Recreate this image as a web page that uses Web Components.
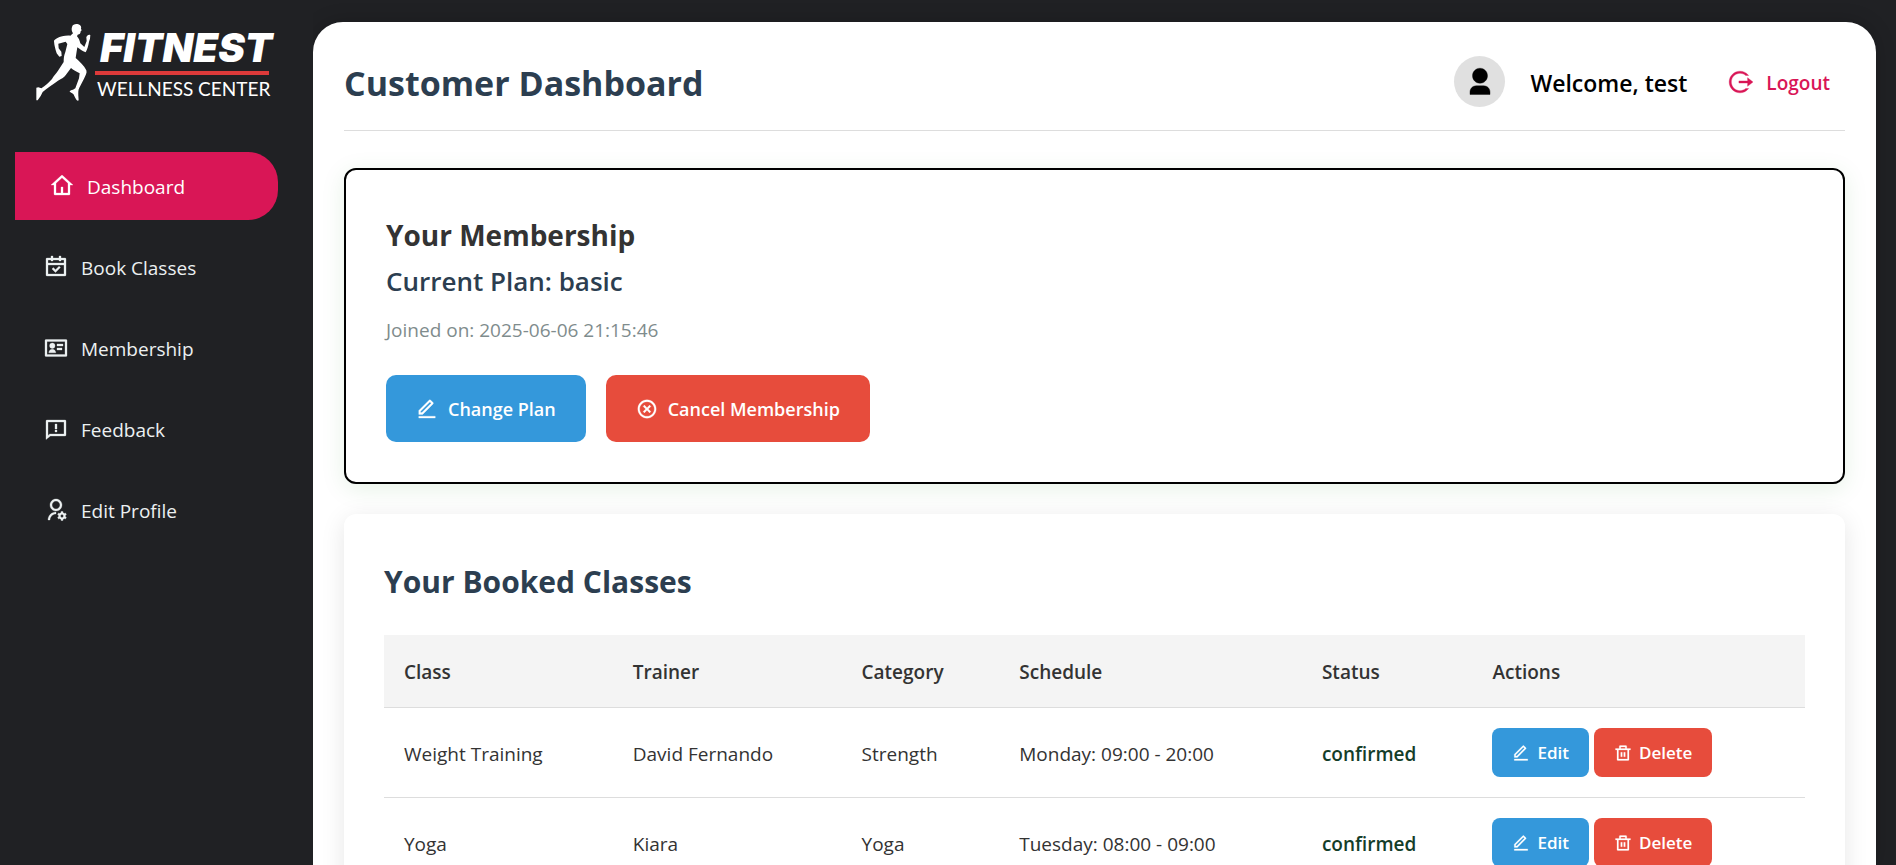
<!DOCTYPE html>
<html lang="en">
<head>
<meta charset="utf-8">
<meta name="viewport" content="width=device-width, initial-scale=1">
<title>Fitnest – Customer Dashboard</title>
<style>
  :root {
    --ink: #202124;
    --accent: #d91656;
    --navy: #2c3e50;
    --text: #333;
    --blue: #3498db;
    --red: #e74c3c;
    --line: #ddd;
  }
  body {
    margin: 0;
    background: var(--ink);
    color: var(--text);
    font: 19px/30px "Open Sans", "Noto Sans", sans-serif;
  }
</style>
</head>
<body>
<fit-layout>
  <fit-sidebar slot="sidebar">
    <fit-nav-item icon="home" active>Dashboard</fit-nav-item>
    <fit-nav-item icon="calendar">Book Classes</fit-nav-item>
    <fit-nav-item icon="card">Membership</fit-nav-item>
    <fit-nav-item icon="feedback">Feedback</fit-nav-item>
    <fit-nav-item icon="profile">Edit Profile</fit-nav-item>
  </fit-sidebar>
  <fit-header user="test">Customer Dashboard</fit-header>
  <fit-membership plan="basic" joined="2025-06-06 21:15:46"></fit-membership>
  <fit-bookings></fit-bookings>
</fit-layout>

<script>
const define = (name, html, setup) => {
  const template = document.createElement('template');
  template.innerHTML = html;
  customElements.define(name, class extends HTMLElement {
    constructor() {
      super();
      this.attachShadow({ mode: 'open' }).append(template.content.cloneNode(true));
    }
    connectedCallback() {
      if (setup) setup(this, this.shadowRoot);
    }
  });
};

const ICONS = {
  home: 'M19 21H5C4.448 21 4 20.552 4 20V11H1L11.327 1.612C11.709 1.265 12.291 1.265 12.673 1.612L23 11H20V20C20 20.552 19.552 21 19 21ZM13 19H18V9.157L12 3.703L6 9.157V19H11V13H13V19Z',
  calendar: 'M9 1V3H15V1H17V3H21C21.552 3 22 3.448 22 4V20C22 20.552 21.552 21 21 21H3C2.448 21 2 20.552 2 20V4C2 3.448 2.448 3 3 3H7V1H9ZM20 10H4V19H20V10ZM15.036 11.136L16.45 12.55L11.5 17.5L7.964 13.964L9.379 12.55L11.5 14.672L15.036 11.136ZM7 5H4V8H20V5H17V6H15V5H9V6H7V5Z',
  card: 'M2 3.5H22C22.552 3.5 23 3.948 23 4.5V19.5C23 20.052 22.552 20.5 22 20.5H2C1.448 20.5 1 20.052 1 19.5V4.5C1 3.948 1.448 3.5 2 3.5ZM3 5.5V18.5H21V5.5H3ZM8.3 7A2.7 2.7 0 1 1 8.3 12.4A2.7 2.7 0 1 1 8.3 7ZM4.8 16.8C4.8 14.7 6.3 13.2 8.3 13.2C10.3 13.2 11.8 14.7 11.8 16.8H4.8ZM13 8H19V10H13V8ZM13 12H18V14H13V12Z',
  feedback: 'M6.455 19L2 22.5V4C2 3.448 2.448 3 3 3H21C21.552 3 22 3.448 22 4V18C22 18.552 21.552 19 21 19H6.455ZM4 18.385L5.763 17H20V5H4V18.385ZM11 13H13V15H11V13ZM11 7H13V12H11V7Z',
  profile: 'M12 14V16C8.686 16 6 18.686 6 22H4C4 17.582 7.582 14 12 14ZM12 13C8.685 13 6 10.315 6 7C6 3.685 8.685 1 12 1C15.315 1 18 3.685 18 7C18 10.315 15.315 13 12 13ZM12 11C14.21 11 16 9.21 16 7C16 4.79 14.21 3 12 3C9.79 3 8 4.79 8 7C8 9.21 9.79 11 12 11ZM14.595 18.811C14.533 18.551 14.5 18.279 14.5 18C14.5 17.721 14.533 17.449 14.595 17.189L13.603 16.616L14.603 14.884L15.595 15.457C15.988 15.085 16.468 14.803 17 14.645V13.5H19V14.645C19.532 14.803 20.012 15.085 20.405 15.457L21.397 14.884L22.397 16.616L21.405 17.189C21.467 17.449 21.5 17.721 21.5 18C21.5 18.279 21.467 18.551 21.405 18.811L22.397 19.384L21.397 21.116L20.405 20.543C20.012 20.915 19.532 21.197 19 21.355V22.5H17V21.355C16.468 21.197 15.988 20.915 15.595 20.543L14.603 21.116L13.603 19.384L14.595 18.811ZM18 19.5C18.828 19.5 19.5 18.828 19.5 18C19.5 17.172 18.828 16.5 18 16.5C17.172 16.5 16.5 17.172 16.5 18C16.5 18.828 17.172 19.5 18 19.5Z',
  user: 'M20 22H4V20C4 17.239 6.239 15 9 15H15C17.761 15 20 17.239 20 20V22ZM12 13C8.686 13 6 10.314 6 7C6 3.686 8.686 1 12 1C15.314 1 18 3.686 18 7C18 10.314 15.314 13 12 13Z',
  logout: 'M2 12C2 6.477 6.477 2 12 2C15.271 2 18.176 3.571 20 6H17.291C15.881 4.755 14.029 4 12 4C7.582 4 4 7.582 4 12C4 16.418 7.582 20 12 20C14.029 20 15.882 19.245 17.292 18H20C18.176 20.429 15.272 22 12 22C6.477 22 2 17.523 2 12ZM19 16V13H11V11H19V8L24 12L19 16Z',
  edit: 'M6.414 15.89L16.556 5.748L15.142 4.334L5 14.476V15.89H6.414ZM7.243 17.89H3V13.647L14.435 2.212C14.826 1.822 15.459 1.822 15.849 2.212L18.678 5.041C19.068 5.431 19.068 6.064 18.678 6.455L7.243 17.89ZM3 19.89H21V21.89H3V19.89Z',
  cancel: 'M12 22C6.477 22 2 17.523 2 12C2 6.477 6.477 2 12 2C17.523 2 22 6.477 22 12C22 17.523 17.523 22 12 22ZM12 20C16.418 20 20 16.418 20 12C20 7.582 16.418 4 12 4C7.582 4 4 7.582 4 12C4 16.418 7.582 20 12 20ZM12 10.586L14.828 7.757L16.243 9.172L13.414 12L16.243 14.828L14.828 16.243L12 13.414L9.172 16.243L7.757 14.828L10.586 12L7.757 9.172L9.172 7.757L12 10.586Z',
  trash: 'M17 6H22V8H20V21C20 21.552 19.552 22 19 22H5C4.448 22 4 21.552 4 21V8H2V6H7V3C7 2.448 7.448 2 8 2H16C16.552 2 17 2.448 17 3V6ZM18 8H6V20H18V8ZM9 11H11V17H9V11ZM13 11H15V17H13V11ZM9 4V6H15V4H9Z'
};

define('fit-icon', `
  <style>
    :host { display: block; flex: none; width: 24px; height: 24px; }
    svg { display: block; width: 100%; height: 100%; }
  </style>
  <svg viewBox="0 0 24 24" fill="currentColor" stroke="currentColor" stroke-width=".3" fill-rule="evenodd" aria-hidden="true"><path/></svg>
`, (el, root) => root.querySelector('path').setAttribute('d', ICONS[el.getAttribute('name')]));

define('fit-logo', `
  <style>
    :host { display: flex; align-items: flex-start; color: #fff; white-space: nowrap; }
    svg { flex: none; width: 65px; height: 90px; }
    .name { margin-top: 10px; padding-left: 5px; font: italic 900 40px/40px Inter, sans-serif; }
    .rule { height: 4px; margin: 3px 3px 0 0; background: #dc3a3a; }
    .tag { margin-top: 2px; padding-left: 2px; font: 19px/24px Lato, sans-serif; }
  </style>
  <svg viewBox="0 0 195 270" fill="#fff" aria-hidden="true">
    <path d="M126 27C128 19 137 17 145 19C152 21 155 26 153 32L155 37L152 40C152 46 149 50 143 50L141 55C146 60 149 67 151 76L163 87L170 69L169 58C171 52 176 48 181 51L180 62L177 71C175 83 172 94 167 103C157 99 149 93 142 88C140 98 139 109 137 120C149 131 162 142 169 157C172 165 166 173 162 182L148 209C144 216 145 223 145 233L146 247C143 250 139 246 136 240L130 228L119 221C119 217 124 216 129 215L136 211L147 181L149 166C139 160 130 157 123 150L109 169C104 178 94 183 84 188C67 200 51 211 38 222L32 234L23 247H19L19 209L25 208L34 211C46 203 57 193 66 183C70 174 78 167 84 158L101 132C101 120 102 112 106 102L112 78L107 71L85 77L86 91L94 101L95 114L88 116L80 106C76 94 73 83 72 70C72 66 76 64 81 61C92 55 105 52 121 53L129 46C125 40 124 33 126 27Z"/>
  </svg>
  <div>
    <div class="name">FITNEST</div>
    <div class="rule"></div>
    <div class="tag">WELLNESS CENTER</div>
  </div>
`);

define('fit-nav-item', `
  <style>
    :host { display: block; }
    a { display: flex; align-items: center; gap: 13px; height: 68px; padding-left: 29px; color: #ecf0f1; text-decoration: none; border-radius: 0 30px 30px 0; }
    span { padding-top: 2px; }
    :host([active]) a { padding-left: 35px; color: #fff; background: var(--accent); }
  </style>
  <a href="#"><fit-icon></fit-icon><span><slot></slot></span></a>
`, (el, root) => {
  const icon = document.createElement('fit-icon');
  icon.setAttribute('name', el.getAttribute('icon'));
  root.querySelector('fit-icon').replaceWith(icon);
  if (el.hasAttribute('active')) root.querySelector('a').setAttribute('aria-current', 'page');
});

define('fit-sidebar', `
  <style>
    :host { display: block; background: var(--ink); }
    fit-logo { margin: 18px 0 0 30px; }
    nav { display: flex; flex-direction: column; gap: 13px; padding: 44px 35px 0 15px; }
  </style>
  <fit-logo></fit-logo>
  <nav aria-label="Main"><slot></slot></nav>
`);

define('fit-layout', `
  <style>
    :host { display: grid; grid-template-columns: 313px minmax(0, 1fr); height: 100vh; overflow: hidden; }
    ::slotted(fit-sidebar) { position: relative; z-index: 1; }
    main { margin: 22px 20px 0 0; padding: 34px 31px; background: #fff; border-radius: 30px 30px 0 0; box-shadow: 0 0 20px rgba(0, 0, 0, .2); overflow-y: auto; scrollbar-width: none; }
  </style>
  <slot name="sidebar"></slot>
  <main><slot></slot></main>
`);

define('fit-header', `
  <style>
    :host { display: flex; align-items: center; justify-content: space-between; padding-bottom: 23px; margin-bottom: 37px; border-bottom: 1px solid var(--line); }
    h1 { margin: 0; padding-top: 2px; color: var(--navy); font-size: 34px; line-height: 48px; }
    .user { display: flex; align-items: center; gap: 25px; color: #000; font-weight: 600; }
    .avatar { display: grid; place-items: center; width: 51px; height: 51px; border-radius: 50%; background: #e0e0e0; }
    .avatar fit-icon { width: 30px; height: 30px; }
    span { padding-top: 2px; }
    .welcome { font-size: 23px; }
    a { display: flex; align-items: center; gap: 13px; padding: 0 15px; color: var(--accent); text-decoration: none; }
    a fit-icon { width: 26px; height: 26px; }
  </style>
  <h1><slot></slot></h1>
  <div class="user">
    <div class="avatar"><fit-icon name="user"></fit-icon></div>
    <span class="welcome"></span>
    <a href="#"><fit-icon name="logout"></fit-icon><span>Logout</span></a>
  </div>
`, (el, root) => root.querySelector('.welcome').textContent = 'Welcome, ' + el.getAttribute('user'));

define('fit-button', `
  <style>
    :host { display: block; }
    button { display: flex; align-items: center; gap: 10px; height: 67px; padding: 0 30px; border: 0; border-radius: 10px; background: var(--blue); color: #fff; font: 600 18px/30px "Open Sans", "Noto Sans", sans-serif; cursor: pointer; white-space: nowrap; }
    fit-icon { width: 22px; height: 22px; }
    :host([tone="danger"]) button { background: var(--red); }
    :host([small]) button { gap: 7px; height: 49px; padding: 0 20px; border-radius: 8px; font-size: 17px; }
    :host([small]) fit-icon { width: 18px; height: 18px; }
  </style>
  <button type="button"><fit-icon></fit-icon><span><slot></slot></span></button>
`, (el, root) => {
  const icon = document.createElement('fit-icon');
  icon.setAttribute('name', el.getAttribute('icon'));
  root.querySelector('fit-icon').replaceWith(icon);
});

define('fit-membership', `
  <style>
    :host { display: block; padding: 40px; margin-bottom: 30px; border: 2px solid #000; border-radius: 12px; background: #fff; box-shadow: 0 5px 25px rgba(0, 128, 0, .1); }
    h2 { margin: 0; font-size: 28px; line-height: 50px; }
    h3 { margin: 0; color: var(--navy); font-size: 26px; font-weight: 600; line-height: 42px; }
    p { margin: 13px 0 30px; color: #7f8c8d; }
    .actions { display: flex; gap: 20px; }
  </style>
  <h2>Your Membership</h2>
  <h3></h3>
  <p></p>
  <div class="actions">
    <fit-button icon="edit">Change Plan</fit-button>
    <fit-button icon="cancel" tone="danger">Cancel Membership</fit-button>
  </div>
`, (el, root) => {
  root.querySelector('h3').textContent = 'Current Plan: ' + el.getAttribute('plan');
  root.querySelector('p').textContent = 'Joined on: ' + el.getAttribute('joined');
});

define('fit-bookings', `
  <style>
    :host { display: block; padding: 40px; border-radius: 12px; background: #fff; box-shadow: 0 5px 25px rgba(0, 0, 0, .1); }
    h2 { margin: 0 0 26px; color: var(--navy); font-size: 30px; line-height: 55px; }
    table { width: 100%; table-layout: fixed; border-collapse: separate; border-spacing: 0; }
    th, td { padding: 21px 20px 19px; text-align: left; border-bottom: 1px solid var(--line); white-space: nowrap; }
    th { background: #f4f4f4; font-weight: 600; line-height: 32px; }
    td:last-child { padding: 20px; }
    .person { width: 16.1%; }
    .category { width: 11.1%; }
    .schedule { width: 21.3%; }
    .status { width: 12%; }
    .confirmed { color: #143d29; font-weight: 600; }
    .actions { display: flex; gap: 5px; }
  </style>
  <h2>Your Booked Classes</h2>
  <table>
    <colgroup><col class="person"><col class="person"><col class="category"><col class="schedule"><col class="status"><col></colgroup>
    <thead>
      <tr><th scope="col">Class</th><th scope="col">Trainer</th><th scope="col">Category</th><th scope="col">Schedule</th><th scope="col">Status</th><th scope="col">Actions</th></tr>
    </thead>
    <tbody></tbody>
  </table>
`, (el, root) => {
  const rows = [
    ['Weight Training', 'David Fernando', 'Strength', 'Monday: 09:00 - 20:00', 'confirmed'],
    ['Yoga', 'Kiara', 'Yoga', 'Tuesday: 08:00 - 09:00', 'confirmed']
  ];
  root.querySelector('tbody').innerHTML = rows.map(([name, trainer, category, schedule, status]) => `
    <tr>
      <td>${name}</td><td>${trainer}</td><td>${category}</td><td>${schedule}</td>
      <td class="${status}">${status}</td>
      <td><div class="actions"><fit-button small icon="edit">Edit</fit-button><fit-button small icon="trash" tone="danger">Delete</fit-button></div></td>
    </tr>`).join('');
});
</script>
</body>
</html>
